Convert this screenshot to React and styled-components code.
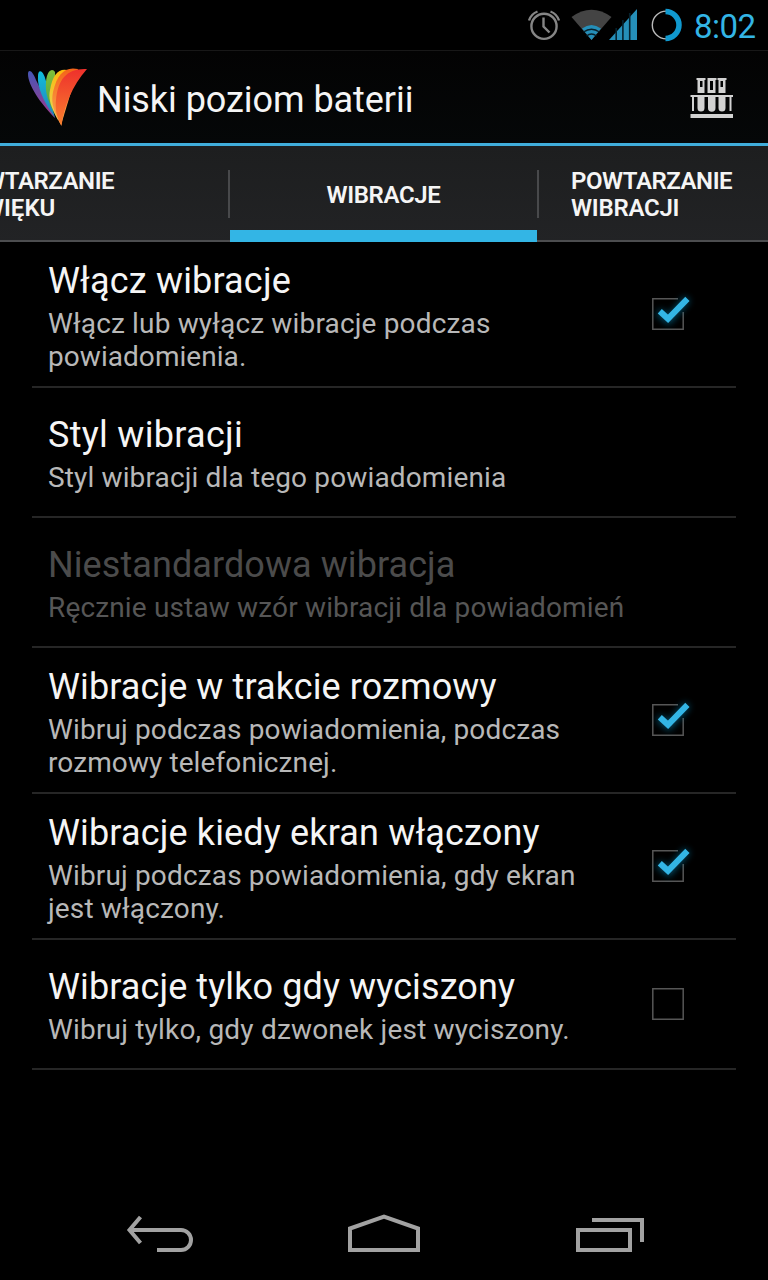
import React from "react";
import styled, { createGlobalStyle } from "styled-components";

const Global = createGlobalStyle`
  body { margin: 0; background: #000; }
  * { box-sizing: border-box; }
`;

const Screen = styled.div`
  width: 768px;
  height: 1280px;
  display: flex;
  flex-direction: column;
  overflow: hidden;
  background: #000;
  color: #f5f5f5;
  font-family: Roboto, "Liberation Sans", sans-serif;
`;

const StatusBar = styled.header`
  height: 50px;
  flex: none;
  display: flex;
  align-items: center;
  justify-content: flex-end;
  padding-right: 12px;
`;

const StatusIcons = styled.svg`
  width: 164px;
  height: 50px;
  margin-right: 10px;
`;

const Clock = styled.time`
  width: 62px;
  color: #33b5e5;
  font-size: 33px;
  line-height: 50px;
  padding-top: 3px;
  white-space: nowrap;
  letter-spacing: -0.5px;
`;

const ActionBar = styled.div`
  height: 96px;
  flex: none;
  display: flex;
  align-items: center;
  padding: 2px 35px 0 28px;
  border-top: 1px solid #181818;
  border-bottom: 3px solid #40addb;
  background: linear-gradient(#030303, #050708);
`;

const AppLogo = styled.svg`
  width: 60px;
  height: 60px;
  margin-right: 9px;
`;

const AppTitle = styled.h1`
  flex: 1;
  margin: 0;
  padding-top: 4px;
  font-size: 36px;
  font-weight: 400;
  line-height: 42px;
  letter-spacing: -0.05px;
`;

const TestTubes = styled.svg`
  width: 43px;
  height: 42px;
`;

const TabStrip = styled.nav`
  height: 96px;
  flex: none;
  display: flex;
  justify-content: center;
  background: linear-gradient(#1d1e1f, #222325);
`;

const Tab = styled.div`
  flex: none;
  width: ${(p) => p.$width}px;
  display: flex;
  align-items: center;
  justify-content: ${(p) => p.$align || "center"};
  padding: ${(p) => p.$pad || "0"};
  border-bottom: ${(p) => (p.$active ? "12px solid #33b5e5" : "2px solid #4c4d4f")};
`;

const TabLabel = styled.span`
  display: flex;
  flex-direction: column;
  margin-left: ${(p) => p.$scroll || 0}px;
  font-size: 24px;
  font-weight: 600;
  line-height: 27px;
  white-space: nowrap;
`;

const TabDivider = styled.i`
  flex: none;
  width: 2px;
  border-bottom: 2px solid #4c4d4f;
  background: linear-gradient(#48494b, #48494b) 0 24px / 2px 48px no-repeat;
`;

const Line = styled.span`
  display: block;
  letter-spacing: ${(p) => p.$track || 0}px;
`;

const List = styled.main`
  flex: 1;
  padding: 0 32px;
`;

const Row = styled.section`
  height: ${(p) => (p.$tall ? 146 : 130)}px;
  display: flex;
  align-items: center;
  justify-content: space-between;
  padding: 0 51px 0 16px;
  border-bottom: 2px solid #262626;
  color: ${(p) => (p.$disabled ? "#4b4b4b" : "#f5f5f5")};
`;

const RowText = styled.div`
  padding-top: 4px;
  white-space: nowrap;
`;

const RowTitle = styled.h2`
  margin: 0 0 5px;
  font-size: 36px;
  font-weight: 400;
  line-height: 42px;
`;

const Summary = styled.p`
  margin: 0;
  font-size: 28px;
  line-height: 33px;
  color: ${(p) => (p.$disabled ? "#565656" : "#b8b8b8")};
`;

const CheckSvg = styled.svg`
  width: 34px;
  height: 34px;
  flex: none;
  overflow: visible;
`;

const NavBar = styled.footer`
  height: 96px;
  flex: none;
  display: flex;
  align-items: center;
  justify-content: center;
`;

const NavButton = styled.div`
  width: 224px;
  display: flex;
  justify-content: center;
  svg { width: 80px; height: 48px; }
`;

function Checkbox({ checked }) {
  return (
    <CheckSvg viewBox="0 0 34 34">
      <defs>
        <filter id="glow" x="-50%" y="-50%" width="200%" height="200%">
          <feGaussianBlur stdDeviation="3.5" />
        </filter>
      </defs>
      <path
        d={checked ? "M27 1.8H1.8V32.2H32.2V15" : "M1.8 1.8H32.2V32.2H1.8Z"}
        fill="none"
        stroke="#565656"
        strokeWidth="1.5"
      />
      {checked && (
        <>
          <path d="M7.5 14.5L17.5 23L36.5 1.5" fill="none" stroke="#0a86b5" strokeWidth="7" opacity=".6" filter="url(#glow)" />
          <path d="M8.8 14.3L17 21.8L36.4 1.8" fill="none" stroke="#33b5e5" strokeWidth="6" />
        </>
      )}
    </CheckSvg>
  );
}

const rows = [
  { title: ["Włącz wibracje", 0.17], lines: [["Włącz lub wyłącz wibracje podczas", 0.16], ["powiadomienia.", 0.05]], checked: true },
  { title: ["Styl wibracji", 0.3], lines: [["Styl wibracji dla tego powiadomienia", 0.14]] },
  { title: ["Niestandardowa wibracja", 0.08], lines: [["Ręcznie ustaw wzór wibracji dla powiadomień", 0.15]], disabled: true },
  { title: ["Wibracje w trakcie rozmowy", 0.1], lines: [["Wibruj podczas powiadomienia, podczas", 0.14], ["rozmowy telefonicznej.", 0.1]], checked: true },
  { title: ["Wibracje kiedy ekran włączony", 0.15], lines: [["Wibruj podczas powiadomienia, gdy ekran", 0.15], ["jest włączony.", 0.15]], checked: true },
  { title: ["Wibracje tylko gdy wyciszony", 0.1], lines: [["Wibruj tylko, gdy dzwonek jest wyciszony.", 0.19]], checked: false },
];

export default function App() {
  return (
    <Screen>
      <Global />
      <StatusBar>
        <StatusIcons viewBox="0 0 164 50">
          <g fill="none" stroke="#858585" strokeWidth="2.4">
            <circle cx="24" cy="26.3" r="12.6" />
            <path d="M23.5 17.5V26.500L29.500 32.500M9 20.500Q11 14 17.500 11.500M39 20.500Q37 14 30.500 11.500" />
          </g>
          <path d="M51.500 17Q71.500 2.500 91.500 17L71.500 40Z" fill="#444" />
          <path d="M62 28.500Q71.500 21.500 81 28.500L71.500 40Z" fill="#258fb9" />
          <path d="M63.500 32Q71.500 26.500 79.500 32M66.500 36Q71.500 32 76.500 36" fill="none" stroke="#08202a" strokeWidth="1.5" />
          <path d="M89 40L117 9V40Z" fill="#258fb9" />
          <path d="M96.200 28V40M102.900 20V40M109.700 13V40" stroke="#06222e" strokeWidth="1.600" />
          <circle cx="146.200" cy="25" r="13.900" fill="none" stroke="#bbb" strokeWidth="1.400" />
          <path d="M145.500 11.500A13.400 13.400 0 0 1 145.500 38.500" fill="none" stroke="#1099cf" strokeWidth="5.500" />
        </StatusIcons>
        <Clock>8:02</Clock>
      </StatusBar>

      <ActionBar>
        <AppLogo viewBox="0 0 60 60">
          <defs>
            <linearGradient id="violet" x1="0" y1="0" x2="0" y2="1"><stop stopColor="#4656b5" /><stop offset="1" stopColor="#a03a8c" /></linearGradient>
            <linearGradient id="cyan" x1="0" y1="0" x2="0" y2="1"><stop stopColor="#10bddd" /><stop offset="1" stopColor="#2780b5" /></linearGradient>
            <linearGradient id="green" x1="0" y1="0" x2="0" y2="1"><stop stopColor="#7fc13a" /><stop offset="1" stopColor="#479d45" /></linearGradient>
            <linearGradient id="yellow" x1="0" y1="0" x2="0" y2="1"><stop stopColor="#fbb80d" /><stop offset="1" stopColor="#e5d75f" /></linearGradient>
            <linearGradient id="orange" x1="0" y1="0" x2="0" y2="1"><stop stopColor="#f46318" /><stop offset="1" stopColor="#fbaf52" /></linearGradient>
            <linearGradient id="red" x1="0" y1="0" x2="0" y2="1"><stop stopColor="#ee302c" /><stop offset="1" stopColor="#f9812e" /></linearGradient>
          </defs>
          <path d="M0 6C0 0 5 3 8 12L27 50C12 35 0 17 0 6Z" fill="url(#violet)" />
          <path d="M10 8C10 1 15 1 18 13L27 50C15 33 9 18 10 8Z" fill="url(#cyan)" />
          <path d="M18 14C19 1 25 0 27 4L29 50C20 34 17 25 18 14Z" fill="url(#green)" />
          <path d="M22 22C25 5 32 -1 42 3L30 52C23 39 20 31 22 22Z" fill="url(#yellow)" />
          <path d="M25 24C29 6 37 -2 50 1L33 57C25 43 23 34 25 24Z" fill="url(#orange)" />
          <path d="M28 32C30 11 39 0 59 1C44 18 36 38 33.500 58C28 48 27 40 28 32Z" fill="url(#red)" />
        </AppLogo>
        <AppTitle>Niski poziom baterii</AppTitle>
        <TestTubes viewBox="0.5 0 43 42" fill="#d2d2d2">
          <path d="M7 1H16V3H7ZM18 1H27V3H18ZM28 1H37V3H28Z" />
          <path fillRule="evenodd" d="M8 3H15V16H8ZM10.500 4V10H13V4ZM18 3H26V16H18ZM20.500 4V13H23.500V4ZM29 3H36V16H29ZM31 4V10H33.500V4Z" />
          <path d="M1 18H43.500V20H42V34H40V20H36V31A3.500 3.500 0 0 1 29 31V20H26V31A3.500 3.500 0 0 1 18.500 31V20H15V31A3.500 3.500 0 0 1 8 31V20H4.500V34H2.500V20H1ZM1 37H43.500V41H1Z" />
        </TestTubes>
      </ActionBar>

      <TabStrip>
        <Tab $width={228} $align="flex-start" $pad="4px 0 0">
          <TabLabel $scroll={-47}>
            <Line $track={-0.45}>POWTARZANIE</Line>
            <Line>DŹWIĘKU</Line>
          </TabLabel>
        </Tab>
        <TabDivider />
        <Tab $width={307} $active $pad="14px 0 0">
          <TabLabel><Line $track={-0.35}>WIBRACJE</Line></TabLabel>
        </Tab>
        <TabDivider />
        <Tab $width={229} $align="flex-start" $pad="4px 0 0 32px">
          <TabLabel>
            <Line $track={-0.45}>POWTARZANIE</Line>
            <Line $track={-0.25}>WIBRACJI</Line>
          </TabLabel>
        </Tab>
      </TabStrip>

      <List>
        {rows.map((r) => (
          <Row key={r.title[0]} $tall={r.lines.length > 1} $disabled={r.disabled}>
            <RowText>
              <RowTitle><Line $track={r.title[1]}>{r.title[0]}</Line></RowTitle>
              <Summary $disabled={r.disabled}>
                {r.lines.map(([text, track]) => <Line key={text} $track={track}>{text}</Line>)}
              </Summary>
            </RowText>
            {r.checked !== undefined && <Checkbox checked={r.checked} />}
          </Row>
        ))}
      </List>

      <NavBar>
        <NavButton>
          <svg viewBox="0 0 80 48" fill="none" stroke="#a2a2a2" strokeWidth="4">
            <path d="M10 22H61A10 10 0 0 1 61 42H37M20.500 9L9.500 22L20.500 35" />
          </svg>
        </NavButton>
        <NavButton>
          <svg viewBox="0 0 80 48" fill="none" stroke="#a2a2a2" strokeWidth="4">
            <path d="M6 42V20.500L40 8.500L74 20.500V42Z" />
          </svg>
        </NavButton>
        <NavButton>
          <svg viewBox="0 0 80 48" fill="none" stroke="#a2a2a2" strokeWidth="4">
            <path d="M10 22H62V42H10ZM24 12H74V34" />
          </svg>
        </NavButton>
      </NavBar>
    </Screen>
  );
}
